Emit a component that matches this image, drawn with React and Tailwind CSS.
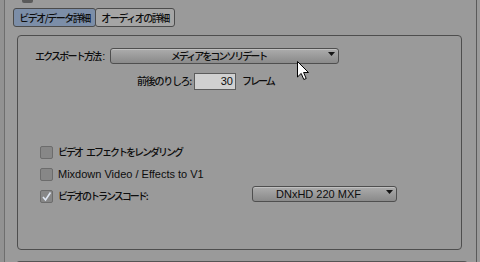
const JP = "font-['Noto_Sans_CJK_JP',sans-serif] text-[10px] font-medium leading-none whitespace-nowrap";
const LAT = "font-['Liberation_Sans',sans-serif] text-[11px] leading-none whitespace-nowrap";

function Arrow() {
  return (
    <svg className="absolute right-[3px] top-[3px]" width="7" height="4" viewBox="0 0 7 4">
      <path d="M0 0H7L3.5 4Z" fill="#151515" />
    </svg>
  );
}

function Dropdown({ className, children }) {
  return (
    <div
      className={
        "relative flex items-center justify-center pr-[12px] border border-[#4f4f4f] rounded-[3px] bg-linear-to-b from-[#acacac] to-[#8a8a8a] shadow-[inset_0_1px_0_rgba(255,255,255,0.25)] shrink-0 " +
        className
      }
    >
      {children}
      <Arrow />
    </div>
  );
}

function Checkbox({ checked }) {
  return (
    <div className="w-[13px] h-[13px] rounded-[2px] bg-[#878787] border border-[#6c6c6c] flex items-center justify-center shrink-0">
      {checked && (
        <svg width="11" height="11" viewBox="0 0 11 11">
          <path d="M2 6L4.5 9L9.5 1.5" fill="none" stroke="#dfe6f2" strokeWidth="1.6" />
        </svg>
      )}
    </div>
  );
}

export default function App() {
  return (
    <div className="relative w-[480px] h-[262px] overflow-hidden bg-[#9a9a9a] flex text-[#0d0d0d]">
      <div className="w-[4px] h-full bg-[#929292] shrink-0" />
      <div className="w-px h-full bg-[#6e6e6e] shrink-0" />
      <div className="w-[471px] h-full flex flex-col shrink-0">
        <div className="h-[8px] shrink-0">
          <div className="ml-[17px] w-[11px] h-[3px] bg-[#5a5a5a] rounded-b-[2px]" />
        </div>
        <div className="ml-[8px] flex h-[19px] shrink-0">
          <div className={"w-[83px] h-full border border-[#4b4b4b] rounded-[3px] bg-[#7c8ea8] flex items-center justify-center tracking-[-1.5px] " + JP}>
            ビデオ/データ詳細
          </div>
          <div className={"-ml-px w-[80px] h-full border border-[#4b4b4b] rounded-[3px] bg-[#a5a5a5] flex items-center justify-center tracking-[-1.5px] " + JP}>
            オーディオの詳細
          </div>
        </div>
        <div className="mt-[8px] ml-[12px] w-[445px] h-[215px] border border-[#4e4e4e] rounded-[4px] flex flex-col shrink-0">
          <div className="mt-[12px] h-[16px] flex items-center pl-[17px] shrink-0">
            <div className="w-[75px] flex items-center">
              <span className={"tracking-[-1.8px] " + JP}>エクスポート方法</span>
              <span className={"ml-[2px] " + LAT}>:</span>
            </div>
            <Dropdown className="w-[229px] h-[16px]">
              <span className={"tracking-[-2px] " + JP}>メディアをコンソリデート</span>
            </Dropdown>
          </div>
          <div className="mt-[8px] h-[18px] flex items-center shrink-0">
            <span className={"w-[173px] text-right tracking-[-1.3px] " + JP}>前後のりしろ:</span>
            <div className={"ml-[3px] w-[42px] h-[17px] bg-[#d0d0d0] border border-[#5c5c5c] flex items-center justify-end pr-[2px] shrink-0 " + LAT}>
              30
            </div>
            <span className={"ml-[6px] tracking-[-2px] " + JP}>フレーム</span>
          </div>
          <div className="mt-[51px] flex flex-col shrink-0">
            <div className="h-[22px] flex items-center pl-[22px]">
              <Checkbox />
              <span className={"ml-[5px] tracking-[-2px] " + JP}>ビデオ</span>
              <span className={"ml-[4px] tracking-[-2px] " + JP}>エフェクトをレンダリング</span>
            </div>
            <div className="h-[22px] flex items-center pl-[22px]">
              <Checkbox />
              <span className={"ml-[5px] " + LAT}>Mixdown Video / Effects to V1</span>
            </div>
            <div className="h-[22px] flex items-center pl-[22px]">
              <Checkbox checked />
              <span className={"ml-[5px] w-[194px] tracking-[-2px] " + JP}>ビデオのトランスコード:</span>
              <Dropdown className="w-[145px] h-[16px] mb-[4px]">
                <span className={LAT}>DNxHD 220 MXF</span>
              </Dropdown>
            </div>
          </div>
        </div>
        <div className="mt-[11px] ml-[11px] w-[452px] h-[6px] border-t border-l border-r border-[#555] rounded-t-[4px] shrink-0" />
      </div>
      <div className="w-px h-full bg-[#5a5a5a] shrink-0" />
      <div className="flex-1 bg-[#9a9a9a]" />
      <svg className="absolute left-[297px] top-[61px]" width="13" height="20" viewBox="0 0 13 20">
        <path d="M0.5 0.5V16L4.2 12.4L6.8 18.5L9.2 17.5L6.6 11.5H11.5Z" fill="#fff" stroke="#000" strokeWidth="1" strokeLinejoin="round" />
      </svg>
    </div>
  );
}
